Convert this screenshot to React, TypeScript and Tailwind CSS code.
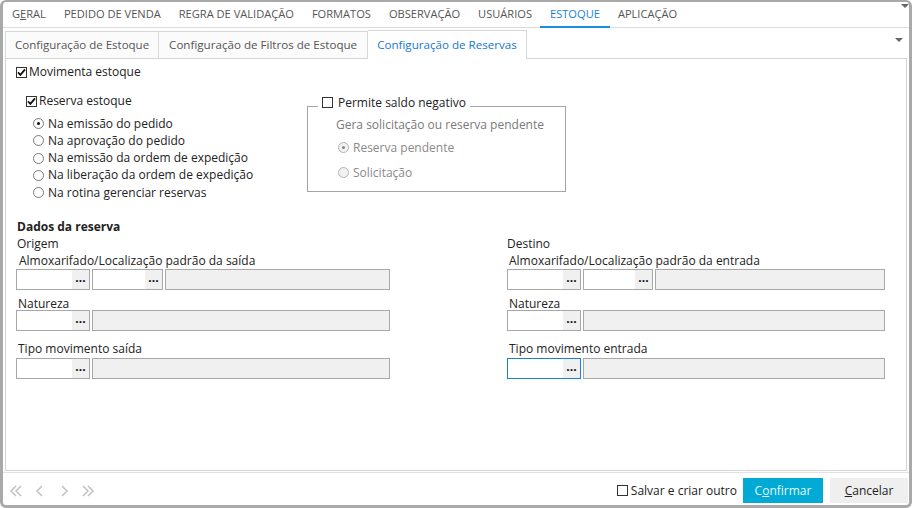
import React from "react"

const topTabs = ["GERAL", "PEDIDO DE VENDA", "REGRA DE VALIDAÇÃO", "FORMATOS", "OBSERVAÇÃO", "USUÁRIOS", "ESTOQUE", "APLICAÇÃO"]

function CheckBox({ checked = false }: { checked?: boolean }) {
  return (
    <span className="w-[11px] h-[11px] border border-[#333] bg-white flex items-center justify-center shrink-0">
      {checked && (
        <svg width="9" height="9" viewBox="0 0 9 9">
          <path d="M1 4.4 L3.4 6.9 L8 1.4" fill="none" stroke="#111" strokeWidth="1.8" />
        </svg>
      )}
    </span>
  )
}

function Radio({ checked = false, disabled = false }: { checked?: boolean; disabled?: boolean }) {
  return (
    <span
      className={
        disabled
          ? "w-[11px] h-[11px] rounded-full border border-[#b4b4b4] bg-[#f2f2f2] flex items-center justify-center shrink-0"
          : "w-[11px] h-[11px] rounded-full border border-[#7a7a7a] bg-white flex items-center justify-center shrink-0"
      }
    >
      {checked && <span className={disabled ? "w-[3px] h-[3px] rounded-full bg-[#888]" : "w-[3px] h-[3px] rounded-full bg-[#111]"} />}
    </span>
  )
}

function Lookup({ w, focused = false }: { w: string; focused?: boolean }) {
  return (
    <div className={`${w} h-[21px] border ${focused ? "border-[#1a7fd6]" : "border-[#a8a8a8]"} bg-white flex justify-end shrink-0`}>
      <div className="w-[17px] h-full bg-[#f0f0f0] flex items-center justify-center text-[12px] font-bold leading-none text-[#111] pb-[4px]">...</div>
    </div>
  )
}

function Readonly() {
  return <div className="flex-1 h-[21px] border border-[#a8a8a8] bg-[#f0f0f0]" />
}

function Label({ children, className = "" }: { children: React.ReactNode; className?: string }) {
  return <div className={`h-[13px] leading-[13px] whitespace-nowrap ${className}`}>{children}</div>
}

function Triangle() {
  return <span className="block w-0 h-0 border-l-[4px] border-r-[4px] border-t-[4px] border-l-transparent border-r-transparent border-t-[#666]" />
}

function Chevron({ d }: { d: string }) {
  return (
    <svg width="18" height="16" viewBox="0 0 18 16">
      <path d={d} fill="none" stroke="#c4c4c4" strokeWidth="1.6" />
    </svg>
  )
}

export default function App() {
  return (
    <div
      className="w-[912px] h-[508px] bg-white border-x-[3px] border-b-[3px] border-t-[2px] border-[#a9a9a9] rounded-[6px] flex flex-col overflow-hidden text-[#222] relative"
      style={{ fontFamily: '"Open Sans", "Noto Sans", sans-serif' }}
    >
      {/* Main tabs */}
      <div className="h-[26px] border-b border-[#dcdcdc] flex shrink-0 relative">
        {topTabs.map((t) => (
          <div
            key={t}
            className={
              t === "ESTOQUE"
                ? "px-[10px] -mx-[1px] flex items-center text-[11.1px] text-[#1a7fd6] border-b-2 border-[#1a8ee0] -mb-px"
                : "px-[9px] flex items-center text-[11.1px] text-[#555]"
            }
          >
            {t === "GERAL" ? (
              <span>
                G<span className="underline">E</span>RAL
              </span>
            ) : (
              t
            )}
          </div>
        ))}
        <span className="absolute right-[0px] top-[2px]">
          <Triangle />
        </span>
      </div>

      {/* Sub tabs + panel */}
      <div className="flex-1 flex flex-col mx-[2px]">
        <div className="h-[30px] flex items-end relative shrink-0">
          <div className="h-[27px] px-[9px] flex items-center border-t border-l border-[#d8d8d8] bg-[#fbfbfb] text-[11.5px] text-[#555]">
            Configuração de Estoque
          </div>
          <div className="h-[27px] px-[10px] flex items-center border-t border-l border-r border-[#d8d8d8] bg-[#fbfbfb] text-[11.6px] text-[#555]">
            Configuração de Filtros de Estoque
          </div>
          <div className="h-[29px] px-[9px] flex items-center border-t border-r border-[#d8d8d8] bg-white text-[11.6px] text-[#1479cf] relative z-10 -mb-px">
            Configuração de Reservas
          </div>
          <span className="absolute right-[4px] top-[10px]">
            <Triangle />
          </span>
        </div>

        <div className="flex-1 border border-[#d4d4d4] flex flex-col pl-[10px] text-[12px]">
          <div className="h-[14px] mt-[6px] flex items-center gap-[2px]">
            <CheckBox checked />
            <span>Movimenta estoque</span>
          </div>

          <div className="flex mt-[15px]">
            <div className="w-[291px] pl-[10px] flex flex-col">
              <div className="h-[14px] flex items-center gap-[2px]">
                <CheckBox checked />
                <span>Reserva estoque</span>
              </div>
              <div className="mt-[7px] pl-[7px] flex flex-col">
                {[
                  "Na emissão do pedido",
                  "Na aprovação do pedido",
                  "Na emissão da ordem de expedição",
                  "Na liberação da ordem de expedição",
                  "Na rotina gerenciar reservas",
                ].map((r, i) => (
                  <div key={r} className="h-[17.25px] flex items-center gap-[4px]">
                    <Radio checked={i === 0} />
                    <span>{r}</span>
                  </div>
                ))}
              </div>
            </div>

            <div className="w-[259px] h-[86px] mt-[12px] border border-[#a4a4a4] relative flex flex-col pl-[28px]">
              <div className="absolute -top-[11px] left-[10px] bg-white px-[4px] h-[13px] flex items-center gap-[5px]">
                <CheckBox />
                <span>Permite saldo negativo</span>
              </div>
              <div className="mt-[10px] h-[15px] flex items-center text-[#7a7a7a]">Gera solicitação ou reserva pendente</div>
              <div className="mt-[8px] pl-[2px] h-[15px] flex items-center gap-[4px] text-[#8a8a8a]">
                <Radio checked disabled />
                <span>Reserva pendente</span>
              </div>
              <div className="mt-[10px] pl-[2px] h-[15px] flex items-center gap-[4px] text-[#8a8a8a]">
                <Radio disabled />
                <span>Solicitação</span>
              </div>
            </div>
          </div>

          <Label className="mt-[19px] font-bold pl-[1px]">Dados da reserva</Label>

          <div className="flex mt-[4px]">
            {/* Origem */}
            <div className="w-[374px] flex flex-col">
              <Label className="pl-[1px]">Origem</Label>
              <Label className="mt-[4px] pl-[3px]">Almoxarifado/Localização padrão da saída</Label>
              <div className="mt-[2px] flex gap-[2px]">
                <Lookup w="w-[74px]" />
                <Lookup w="w-[71px]" />
                <Readonly />
              </div>
              <Label className="mt-[7px] pl-[2px]">Natureza</Label>
              <div className="flex gap-[2px]">
                <Lookup w="w-[74px]" />
                <Readonly />
              </div>
              <Label className="mt-[11px] pl-[2px]">Tipo movimento saída</Label>
              <div className="mt-[3px] flex gap-[2px]">
                <Lookup w="w-[74px]" />
                <Readonly />
              </div>
            </div>

            {/* Destino */}
            <div className="w-[378px] ml-[117px] flex flex-col">
              <Label>Destino</Label>
              <Label className="mt-[4px] pl-[2px]">Almoxarifado/Localização padrão da entrada</Label>
              <div className="mt-[2px] flex gap-[2px]">
                <Lookup w="w-[74px]" />
                <Lookup w="w-[70px]" />
                <Readonly />
              </div>
              <Label className="mt-[7px] pl-[2px]">Natureza</Label>
              <div className="flex gap-[2px]">
                <Lookup w="w-[74px]" />
                <Readonly />
              </div>
              <Label className="mt-[11px] pl-[2px]">Tipo movimento entrada</Label>
              <div className="mt-[3px] flex gap-[2px]">
                <Lookup w="w-[74px]" focused />
                <Readonly />
              </div>
            </div>
          </div>
        </div>
      </div>

      {/* Footer */}
      <div className="h-[33px] mt-[1px] border-t border-[#e2e2e2] flex items-center pt-[3px] pl-[4px] pr-[1px] shrink-0">
        <div className="flex items-center gap-[6px]">
          <Chevron d="M9 3 L4 8 L9 13 M14 3 L9 8 L14 13" />
          <Chevron d="M11 3 L6 8 L11 13" />
          <Chevron d="M7 3 L12 8 L7 13" />
          <Chevron d="M4 3 L9 8 L4 13 M9 3 L14 8 L9 13" />
        </div>
        <div className="ml-auto flex items-center gap-[3px] text-[12px] text-[#222]">
          <CheckBox />
          <span>Salvar e criar outro</span>
        </div>
        <button className="ml-[6px] w-[80px] h-[25px] bg-[#00aad4] text-[12px] text-[#e6f6fb]">
          C<span className="underline">o</span>nfirmar
        </button>
        <button className="ml-[7px] w-[78px] h-[25px] bg-[#efefef] text-[12px] text-[#222]">
          <span className="underline">C</span>ancelar
        </button>
      </div>
    </div>
  )
}
